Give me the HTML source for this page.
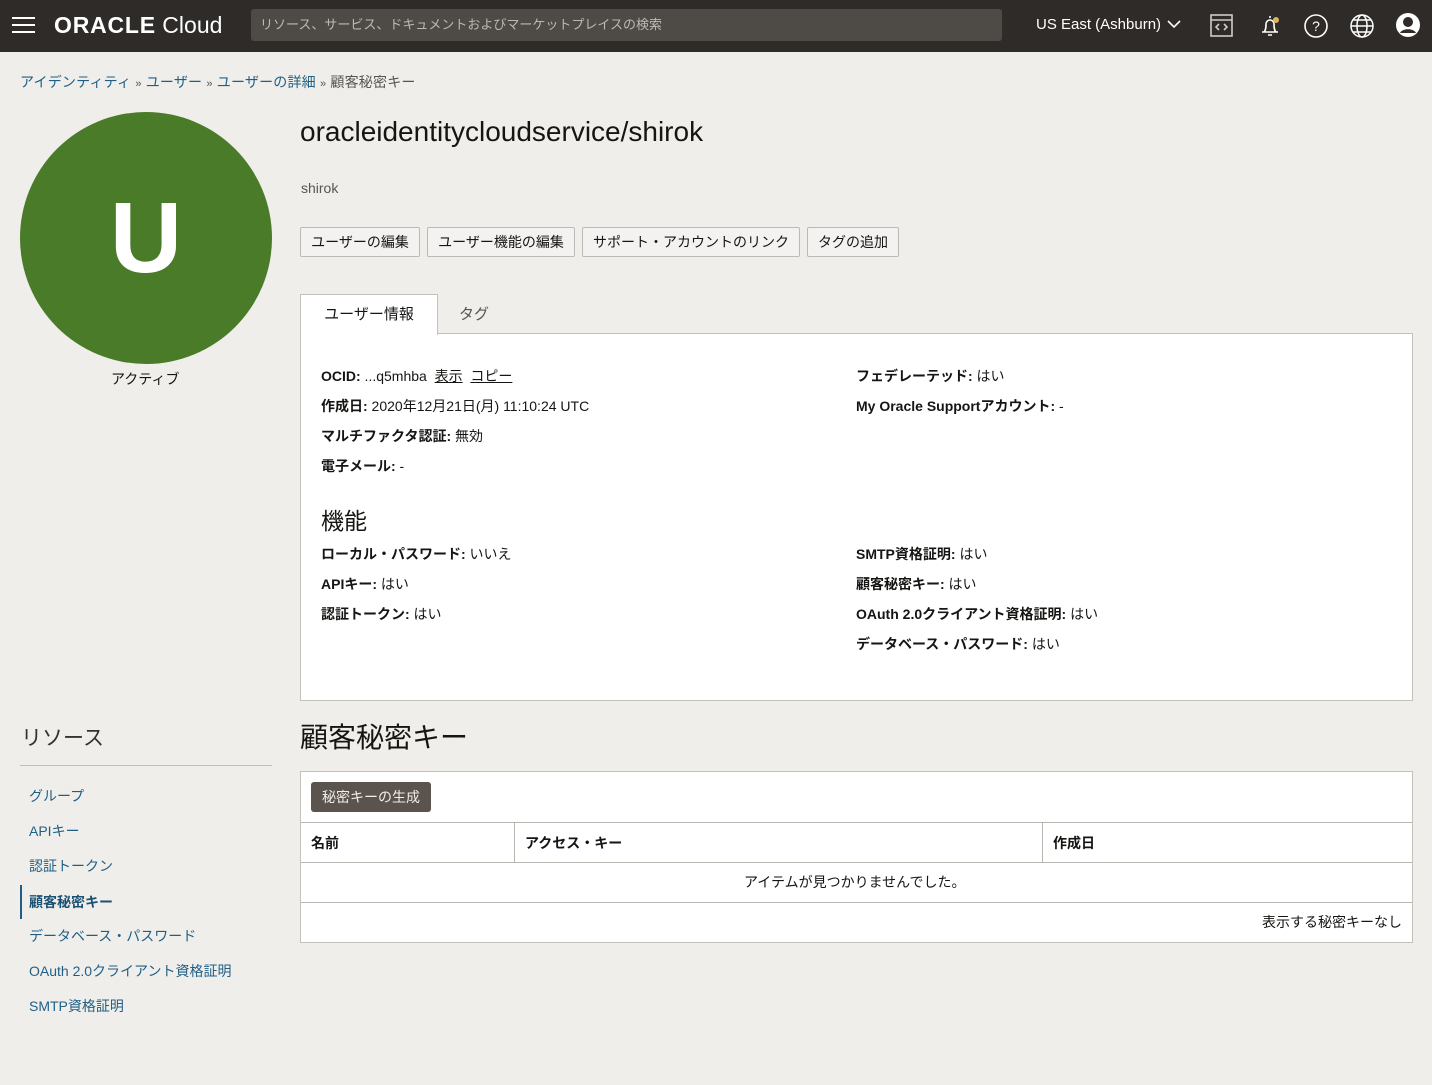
<!DOCTYPE html>
<html><head><meta charset="utf-8"><style>
*{box-sizing:border-box;margin:0;padding:0}
body{width:1432px;height:1085px;background:#f0eeea;font-family:"Liberation Sans","Noto Sans CJK JP",sans-serif;color:#161513;position:relative;overflow:hidden}
.a{position:absolute;white-space:nowrap}
.hdr{position:absolute;left:0;top:0;width:1432px;height:52px;background:#2e2b28}
.search{position:absolute;left:251px;top:9px;width:751px;height:32px;background:#4e4a45;border-radius:3px;color:#bdb8b2;font-size:13px;line-height:32px;padding-left:9px}
.bc{font-size:14px;color:#1f5f86;letter-spacing:0.2px}
.btn{position:absolute;top:227px;height:30px;background:#f3f2f0;border:1px solid #bdbab5;border-radius:2px;font-size:14px;line-height:28px;text-align:center;color:#161513}
.lbl{font-size:14px}
.lbl b{font-weight:bold}
.nav{font-size:14px;color:#1f5f86;left:29px}
</style></head><body>
<div class="hdr">
 <div class="a" style="left:12px;top:17px;width:23px;height:2px;background:#fff;box-shadow:0 7px 0 #fff,0 14px 0 #fff"></div>
 <div class="a" style="left:54px;top:12px;color:#fff;font-size:23px;font-weight:bold;letter-spacing:0.8px">ORACLE<span style="font-weight:normal;letter-spacing:0"> Cloud</span></div>
 <div class="search">リソース、サービス、ドキュメントおよびマーケットプレイスの検索</div>
 <div class="a" style="left:1036px;top:16px;color:#fff;font-size:15px">US East (Ashburn)</div>
 <svg class="a" style="left:1166px;top:18px" width="16" height="12"><path d="M2 3l6 6 6-6" stroke="#fff" stroke-width="1.6" fill="none"/></svg>
 <svg class="a" style="left:1209px;top:13px" width="26" height="26" fill="none" stroke="#ccc" stroke-width="1.6"><rect x="2" y="2" width="21" height="21"/><path d="M2 7h21M10 11l-3 3 3 3M15 11l3 3-3 3"/></svg>
 <svg class="a" style="left:1258px;top:13px" width="26" height="26" fill="none" stroke="#fff" stroke-width="1.6"><path d="M12 3v2M6 19c2-2 2-5 2-8a4 4 0 018 0c0 3 0 6 2 8zM4 19h16M10 22h4"/><circle cx="18" cy="7" r="3" fill="#d9b65a" stroke="none"/></svg>
 <svg class="a" style="left:1303px;top:13px" width="26" height="26" fill="none" stroke="#fff" stroke-width="1.6"><circle cx="13" cy="13" r="11"/><text x="13" y="18" font-size="14" fill="#fff" stroke="none" text-anchor="middle" font-family="Liberation Sans">?</text></svg>
 <svg class="a" style="left:1349px;top:13px" width="26" height="26" fill="none" stroke="#fff" stroke-width="1.5"><circle cx="13" cy="13" r="11"/><ellipse cx="13" cy="13" rx="5" ry="11"/><path d="M2 13h22M4 7h18M4 19h18"/></svg>
 <svg class="a" style="left:1395px;top:12px" width="26" height="26"><circle cx="13" cy="13" r="12" fill="#fff"/><circle cx="13" cy="10" r="5" fill="#2e2b28"/><path d="M5 21c2-5 14-5 16 0" fill="#2e2b28"/></svg>
</div>
<div class="a bc" style="left:20px;top:72px">アイデンティティ <span style="color:#555;font-size:11px">»</span> ユーザー <span style="color:#555;font-size:11px">»</span> ユーザーの詳細 <span style="color:#555;font-size:11px">»</span> <span style="color:#555">顧客秘密キー</span></div>
<div class="a" style="left:20px;top:112px;width:252px;height:252px;border-radius:50%;background:#4a7b29;color:#fff;font-size:100px;font-weight:bold;text-align:center;line-height:252px">U</div>
<div class="a" style="left:111px;top:369px;font-size:14px">アクティブ</div>
<div class="a" style="left:300px;top:116px;font-size:28px">oracleidentitycloudservice/shirok</div>
<div class="a" style="left:301px;top:180px;font-size:14px;color:#555">shirok</div>
<div class="btn" style="left:300px;width:120px">ユーザーの編集</div>
<div class="btn" style="left:427px;width:148px">ユーザー機能の編集</div>
<div class="btn" style="left:582px;width:218px">サポート・アカウントのリンク</div>
<div class="btn" style="left:807px;width:92px">タグの追加</div>
<div class="a" style="left:300px;top:333px;width:1113px;height:368px;background:#fff;border:1px solid #c4c1bc"></div>
<div class="a" style="left:300px;top:294px;width:138px;height:41px;background:#fff;border:1px solid #c4c1bc;border-bottom:none;font-size:15px;line-height:40px;text-align:center">ユーザー情報</div>
<div class="a" style="left:459px;top:303px;font-size:15px;color:#555">タグ</div>
<div class="a lbl" style="left:321px;top:366px"><b>OCID:</b> ...q5mhba &nbsp;<u>表示</u> &nbsp;<u>コピー</u></div>
<div class="a lbl" style="left:321px;top:396px"><b>作成日:</b> 2020年12月21日(月) 11:10:24 UTC</div>
<div class="a lbl" style="left:321px;top:426px"><b>マルチファクタ認証:</b> 無効</div>
<div class="a lbl" style="left:321px;top:456px"><b>電子メール:</b> -</div>
<div class="a lbl" style="left:856px;top:366px"><b>フェデレーテッド:</b> はい</div>
<div class="a lbl" style="left:856px;top:396px"><b>My Oracle Supportアカウント:</b> -</div>
<div class="a" style="left:321px;top:502px;font-size:23px">機能</div>
<div class="a lbl" style="left:321px;top:544px"><b>ローカル・パスワード:</b> いいえ</div>
<div class="a lbl" style="left:321px;top:574px"><b>APIキー:</b> はい</div>
<div class="a lbl" style="left:321px;top:604px"><b>認証トークン:</b> はい</div>
<div class="a lbl" style="left:856px;top:544px"><b>SMTP資格証明:</b> はい</div>
<div class="a lbl" style="left:856px;top:574px"><b>顧客秘密キー:</b> はい</div>
<div class="a lbl" style="left:856px;top:604px"><b>OAuth 2.0クライアント資格証明:</b> はい</div>
<div class="a lbl" style="left:856px;top:634px"><b>データベース・パスワード:</b> はい</div>
<div class="a" style="left:21px;top:722px;font-size:21px;color:#333">リソース</div>
<div class="a" style="left:20px;top:765px;width:252px;height:1px;background:#c9b9b0"></div>
<div class="a nav" style="top:786px">グループ</div>
<div class="a nav" style="top:821px">APIキー</div>
<div class="a nav" style="top:856px">認証トークン</div>
<div class="a" style="left:20px;top:885px;width:2px;height:34px;background:#1f5f86"></div>
<div class="a nav" style="top:892px;font-weight:bold;color:#1b5274">顧客秘密キー</div>
<div class="a nav" style="top:926px">データベース・パスワード</div>
<div class="a nav" style="top:961px">OAuth 2.0クライアント資格証明</div>
<div class="a nav" style="top:996px">SMTP資格証明</div>
<div class="a" style="left:300px;top:716px;font-size:28px">顧客秘密キー</div>
<div class="a" style="left:300px;top:771px;width:1113px;height:172px;background:#fff;border:1px solid #c4c1bc"></div>
<div class="a" style="left:311px;top:782px;width:120px;height:30px;background:#5b534e;border-radius:3px;color:#f0eeea;font-size:14px;line-height:30px;text-align:center">秘密キーの生成</div>
<div class="a" style="left:301px;top:822px;width:1111px;height:1px;background:#b9b6b1"></div>
<div class="a" style="left:301px;top:862px;width:1111px;height:1px;background:#b9b6b1"></div>
<div class="a" style="left:301px;top:902px;width:1111px;height:1px;background:#b9b6b1"></div>
<div class="a" style="left:514px;top:822px;width:1px;height:40px;background:#b9b6b1"></div>
<div class="a" style="left:1042px;top:822px;width:1px;height:40px;background:#b9b6b1"></div>
<div class="a" style="left:311px;top:833px;font-size:14px;font-weight:bold">名前</div>
<div class="a" style="left:525px;top:833px;font-size:14px;font-weight:bold">アクセス・キー</div>
<div class="a" style="left:1053px;top:833px;font-size:14px;font-weight:bold">作成日</div>
<div class="a" style="left:744px;top:872px;font-size:14px">アイテムが見つかりませんでした。</div>
<div class="a" style="left:1262px;top:912px;font-size:14px">表示する秘密キーなし</div>
</body></html>
